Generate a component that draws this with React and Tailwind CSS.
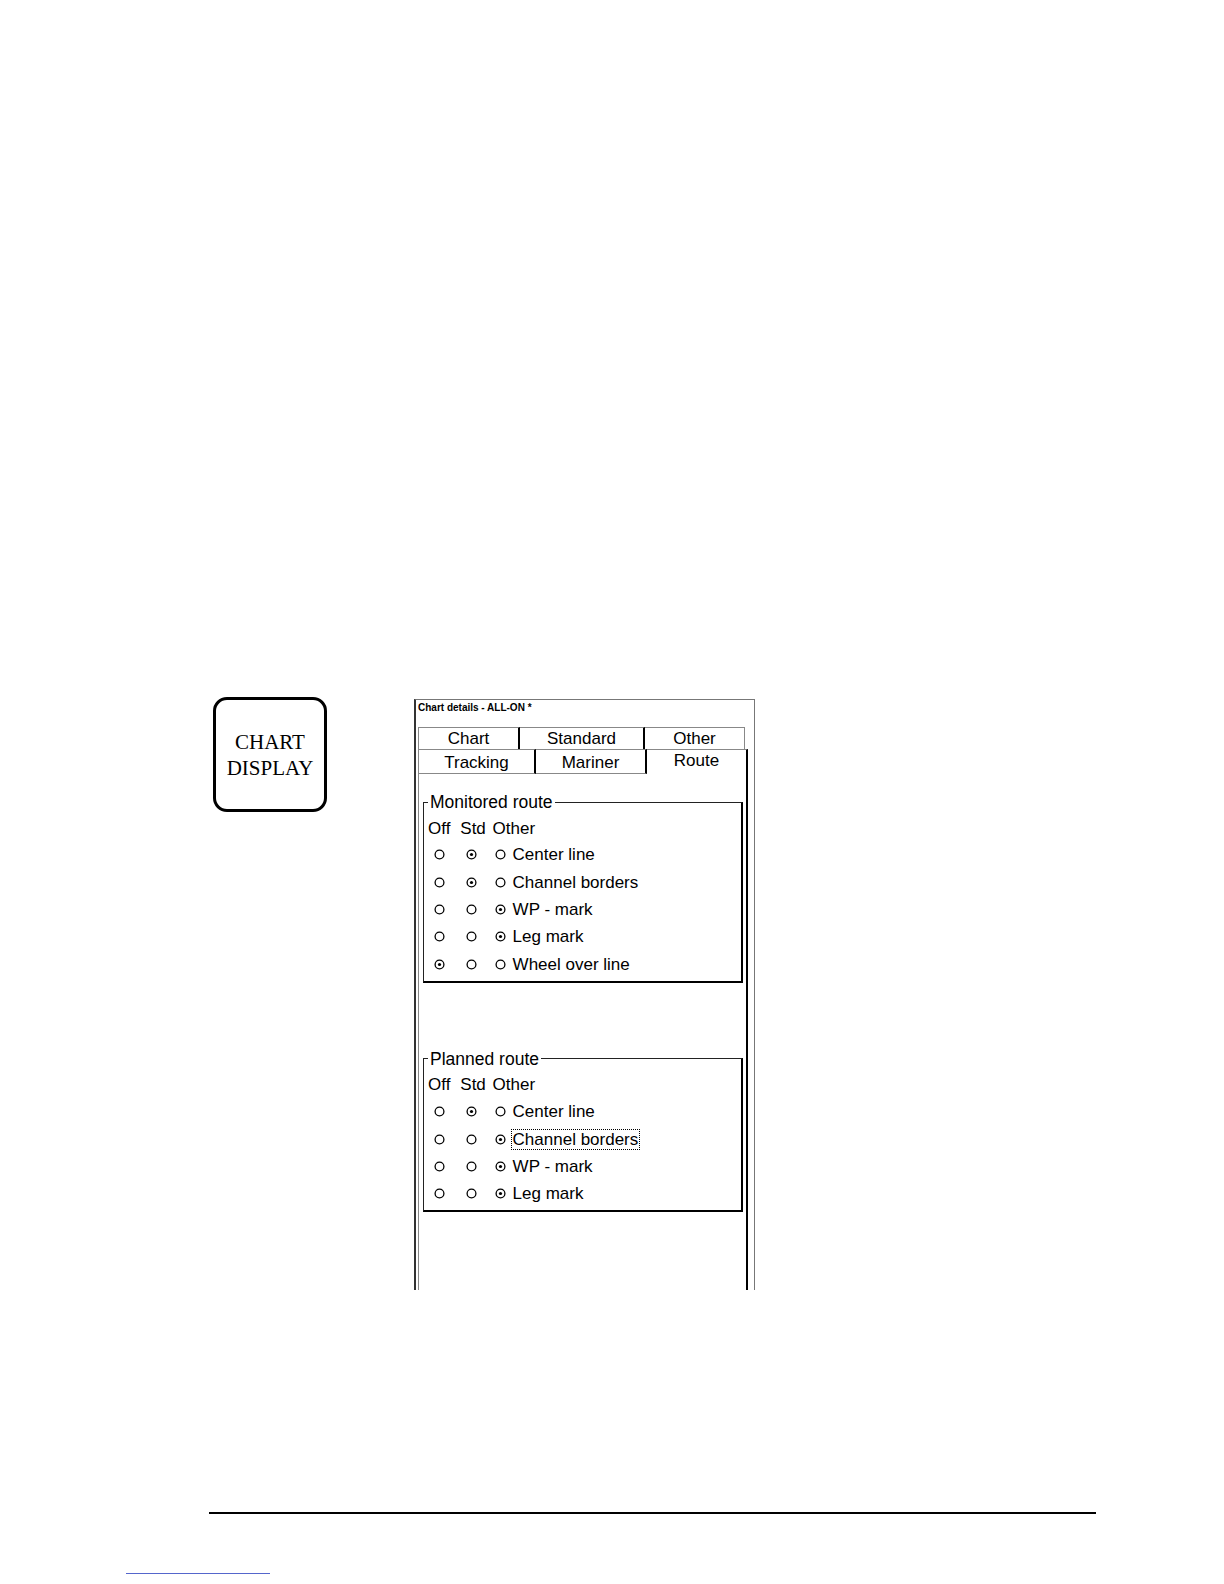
import React from "react";

const Radio = ({ on }) => (
  <svg width="11" height="11" viewBox="0 0 11 11" className="block">
    <circle cx="5.5" cy="5.5" r="4.4" fill="white" stroke="black" strokeWidth="1.3" />
    {on && <circle cx="5.5" cy="5.5" r="1.6" fill="black" />}
  </svg>
);

const Row = ({ v, label, focus }) => (
  <div className="flex items-center h-[27.3px]">
    <div className="w-[32.3px] pl-[5.5px]">
      <Radio on={v === 0} />
    </div>
    <div className="w-[32.3px] pl-[5.5px]">
      <Radio on={v === 1} />
    </div>
    <div className="pl-[2.5px] pr-[4.5px]">
      <Radio on={v === 2} />
    </div>
    {focus ? (
      <span className="border border-dotted border-black px-[1px] leading-[19px]">{label}</span>
    ) : (
      <span className="pl-[2px] leading-[19px]">{label}</span>
    )}
  </div>
);

const Group = ({ title, rows, className }) => (
  <fieldset
    className={
      "border-t border-l border-[#222] border-r-2 border-b-2 border-r-black border-b-black pl-[4px] pb-[3px] ml-[4px] w-[320px] " +
      className
    }
  >
    <legend className="px-[2px] text-[17.5px] leading-[20px]">{title}</legend>
    <div className="flex items-center h-[27.3px] mt-[2px] pt-[2px] leading-[20px]">
      <span className="w-[32.3px]">Off</span>
      <span className="w-[32.3px]">Std</span>
      <span>Other</span>
    </div>
    {rows.map((r, i) => (
      <Row key={i} v={r[0]} label={r[1]} focus={r[2]} />
    ))}
  </fieldset>
);

export default function App() {
  return (
    <div
      className="w-[1224px] h-[1584px] bg-white overflow-hidden text-black"
      style={{ fontFamily: '"Liberation Sans", Arial, sans-serif' }}
    >
      <div className="pt-[697px] flex items-start">
        <div
          className="ml-[213px] w-[114px] h-[115px] border-[3px] border-black rounded-[14px] flex flex-col items-center justify-center text-[21px] leading-[26px]"
          style={{ fontFamily: '"Liberation Serif", "Times New Roman", serif' }}
        >
          <span>CHART</span>
          <span>DISPLAY</span>
        </div>

        <div className="ml-[87px] mt-[2px] w-[341px] h-[591px] border-t border-t-[#777] border-l-2 border-l-[#333] border-r border-r-[#777] flex flex-col">
          <div className="pl-[2px] pt-[2px] text-[10px] leading-[12px] font-bold">Chart details - ALL-ON *</div>

          <div className="ml-[2px] mt-[13px] flex text-[17px]">
            <div className="w-[102px] h-[22px] border-t border-l border-[#888] border-r-2 border-r-black flex items-center justify-center leading-[20px]">Chart</div>
            <div className="w-[125px] h-[22px] border-t border-[#888] border-r-2 border-r-black flex items-center justify-center leading-[20px]">Standard</div>
            <div className="w-[100px] h-[22px] border-t border-[#888] border-r flex items-center justify-center leading-[20px]">Other</div>
          </div>
          <div className="ml-[2px] flex text-[17px]">
            <div className="w-[118px] h-[25px] border-t border-l border-b border-[#888] border-r-2 border-r-black flex items-center justify-center leading-[20px] pt-[2px]">Tracking</div>
            <div className="w-[111px] h-[25px] border-t border-b border-[#888] border-r-2 border-r-black flex items-center justify-center leading-[20px] pt-[2px]">Mariner</div>
            <div className="w-[101px] h-[25px] border-t border-[#888] border-r-2 border-r-black flex justify-center leading-[20px] pt-[1px]">Route</div>
          </div>

          <div className="ml-[2px] w-[330px] flex-1 border-l border-l-[#888] border-r-2 border-r-black text-[17px]">
            <Group
              title="Monitored route"
              className="mt-[18px]"
              rows={[
                [1, "Center line"],
                [1, "Channel borders"],
                [2, "WP - mark"],
                [2, "Leg mark"],
                [0, "Wheel over line"],
              ]}
            />
            <Group
              title="Planned route"
              className="mt-[66px]"
              rows={[
                [1, "Center line"],
                [2, "Channel borders", true],
                [2, "WP - mark"],
                [2, "Leg mark"],
              ]}
            />
          </div>
        </div>
      </div>

      <div className="mt-[222px] ml-[209px] w-[887px] h-[1.5px] bg-black" />
      <div className="mt-[59px] ml-[126px] w-[144px] h-px bg-[#5566cc]" />
    </div>
  );
}
